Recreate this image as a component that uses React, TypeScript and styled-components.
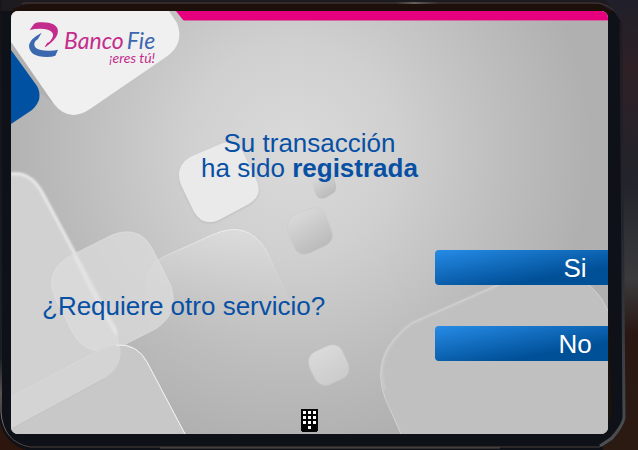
import React from "react";
import styled, { createGlobalStyle } from "styled-components";

const GlobalStyle = createGlobalStyle`
  * { box-sizing: border-box; }
  body { margin: 0; background: #11131a; }
`;

const Bezel = styled.div`
  position: relative;
  min-height: 100vh;
  display: flex;
  padding: 11px 30px 16px 11px;
  font-family: "Liberation Sans", Arial, sans-serif;
`;

const Backdrop = styled.svg`
  position: absolute;
  inset: 0;
  width: 100%;
  height: 100%;
`;

const Screen = styled.main`
  position: relative;
  flex: 1;
  display: flex;
  flex-direction: column;
  overflow: hidden;
  border-radius: 7px;
  background: #bdbdbd;
  color: #0850a4;
`;

const Header = styled.header`
  position: relative;
  display: flex;
  gap: 6px;
  height: 60px;
  padding: 11px 0 0 18px;
`;

const Mark = styled.svg`
  width: 29px;
  height: 35px;
`;

const Brand = styled.div`
  display: flex;
  flex-direction: column;
  align-items: flex-end;
  padding-top: 7px;
  font-family: Lato, sans-serif;
  font-style: italic;
  color: #c32c8c;
`;

const BrandName = styled.div`
  display: flex;
  gap: 3px;
  font-size: 23px;
  line-height: 23px;
`;

const BrandAccent = styled.span`
  color: #3b68ae;
`;

const Tagline = styled.div`
  font-size: 14px;
  line-height: 11px;
`;

const Message = styled.h1`
  position: relative;
  margin: 60px 0 0;
  font-size: 26px;
  line-height: 25px;
  font-weight: 400;
  text-align: center;
`;

const Prompt = styled.section`
  position: relative;
  display: flex;
  align-items: center;
  justify-content: space-between;
  margin-top: 69px;
`;

const Question = styled.h2`
  margin: 0 0 0 31px;
  font-size: 26px;
  line-height: 30px;
  font-weight: 400;
`;

const Answers = styled.div`
  display: flex;
  flex-direction: column;
  gap: 41px;
  width: 29%;
`;

const AnswerButton = styled.button`
  display: flex;
  justify-content: flex-end;
  height: 35px;
  padding: 0;
  border: 0;
  border-radius: 4px 0 0 4px;
  background: linear-gradient(170deg, #2488e2 4%, #005098 72%);
  color: #fff;
  font: 26px/36px "Liberation Sans", Arial, sans-serif;
  cursor: pointer;
`;

const AnswerLabel = styled.span`
  width: 66px;
  text-align: center;
`;

const Footer = styled.footer`
  position: relative;
  display: flex;
  justify-content: center;
  margin-top: auto;
  padding-bottom: 2px;
`;

const KeypadButton = styled.button`
  display: flex;
  padding: 0;
  border: 0;
  background: none;
  cursor: pointer;
`;

function BezelArt() {
  return (
    <Backdrop viewBox="0 0 638 450" preserveAspectRatio="none" aria-hidden="true">
      <defs>
        <linearGradient id="side" x1="0" x2="0" y1="0" y2="1">
          <stop offset="0" stopColor="#20202a" />
          <stop offset=".15" stopColor="#2e2025" />
          <stop offset=".4" stopColor="#22232b" />
          <stop offset=".62" stopColor="#3b3b3d" />
          <stop offset=".74" stopColor="#2a1713" />
          <stop offset="1" stopColor="#2b1a12" />
        </linearGradient>
        <linearGradient id="rim" x1="0" x2="0" y1="0" y2="1">
          <stop offset="0" stopColor="#221a20" />
          <stop offset=".5" stopColor="#23262e" />
          <stop offset="1" stopColor="#4b5056" />
        </linearGradient>
        <linearGradient id="edge" x1="0" x2="0" y1="0" y2="1">
          <stop offset="0" stopColor="#171318" />
          <stop offset=".8" stopColor="#282c30" />
          <stop offset=".88" stopColor="#a09588" />
          <stop offset="1" stopColor="#4d403b" />
        </linearGradient>
        <linearGradient id="shine">
          <stop offset="0" stopColor="#4a3a36" />
          <stop offset=".63" stopColor="#4a3a36" />
          <stop offset=".66" stopColor="#b0a496" />
          <stop offset=".7" stopColor="#4a3a36" />
          <stop offset="1" stopColor="#4a3a36" />
        </linearGradient>
      </defs>
      <rect width="638" height="450" fill="#0e1117" />
      <rect width="638" height="11" fill="#1d1a20" />
      <path d="M14 8 30 4H600L612 12 606 16H10Z" fill="#1d0f09" />
      <path d="M22 4 24 3H598Q610 5 616 13" fill="none" stroke="url(#shine)" />
      <path d="M612 8 621 22 625 418 603 446V450H638V0H606Z" fill="url(#side)" />
      <path d="M621 22 624 418Q622 427 612 438L600 446" fill="none" stroke="url(#rim)" strokeWidth="3" />
      <path d="M608 300 612 412 608 424Z" fill="#1b130e" />
      <path d="M1 0V412Q3 442 30 447H600" fill="none" stroke="url(#edge)" />
      <path d="M0 422Q5 443 26 450H0Z" fill="#2c160d" />
      <path d="M160 448H500" stroke="#978171" opacity=".5" />
    </Backdrop>
  );
}

function ScreenArt() {
  return (
    <Backdrop viewBox="11 11 597 423" preserveAspectRatio="none" aria-hidden="true">
      <defs>
        <radialGradient id="glow" gradientUnits="userSpaceOnUse" cx="292" cy="150" r="300">
          <stop offset="0" stopColor="#dadada" />
          <stop offset=".35" stopColor="#d0d0d0" />
          <stop offset=".72" stopColor="#bdbdbd" />
          <stop offset="1" stopColor="#b0b0b0" />
        </radialGradient>
        <linearGradient id="tile" x1=".1" y1="0" x2=".7" y2="1">
          <stop offset="0" stopColor="#dedede" />
          <stop offset="1" stopColor="#b8b8b8" />
        </linearGradient>
        <linearGradient id="paleTile" x1=".1" y1="0" x2=".7" y2="1">
          <stop offset="0" stopColor="#dddddd" />
          <stop offset="1" stopColor="#cacaca" />
        </linearGradient>
        <linearGradient id="fade" x1="0" y1="0" x2="0" y2="1">
          <stop offset="0" stopColor="#e0e0e0" stopOpacity=".7" />
          <stop offset=".5" stopColor="#c8c8c8" stopOpacity="0" />
        </linearGradient>
        <linearGradient id="fadeLine" x1="0" y1="0" x2="0" y2="1">
          <stop offset="0" stopColor="#ececec" />
          <stop offset=".8" stopColor="#d0d0d0" stopOpacity="0" />
        </linearGradient>
        <filter id="soft" x="-20%" y="-20%" width="140%" height="140%">
          <feGaussianBlur stdDeviation="1" />
        </filter>
      </defs>
      <rect x="11" y="11" width="597" height="423" fill="url(#glow)" />

      <path d="M146 285Q147 266 163 257L212 235Q247 219 266 250L300 322 340 434H146Z" fill="url(#fade)" />
      <path d="M146 285Q147 266 163 257L212 235Q247 219 266 250L302 327" fill="none" stroke="url(#fadeLine)" />

      <path d="M11 173Q31 171 43 194L117 332Q125 355 105 376L11 427Z" fill="#d1d1d1" />
      <path d="M11 174Q31 171 43 194L117 332" fill="none" stroke="#e9e9e9" strokeWidth="3" filter="url(#soft)" />
      <path d="M70 256 112 235Q140 224 153 250L171 286Q179 313 157 328L122 346Q90 360 74 335L56 300Q43 272 70 256Z" fill="#dddddd" fillOpacity=".72" stroke="#e2e2e2" strokeOpacity=".6" />
      <path d="M74 255 98 303 117 335" fill="none" stroke="#eeeeee" strokeWidth="2" opacity=".7" filter="url(#soft)" />

      <path d="M11 397 98 351Q130 334 147 362L185 434H11Z" fill="#c8c8c8" />
      <path d="M11 397 98 351Q109 344 120 345Q124 367 103 379L11 429Z" fill="#d4d4d4" />
      <path d="M104 379 11 429" stroke="#bcbcbc" opacity=".5" />
      <path d="M11 397 98 351Q130 334 147 362L185 434" fill="none" stroke="#d9d9d9" />
      <path d="M116 345Q138 344 147 362L185 434" fill="none" stroke="#efefef" />

      <path d="M401 434 385 398Q369 354 412 323L498 285Q583 252 608 311V434Z" fill="#c0c0c0" />
      <path d="M401 434 385 398Q369 354 412 323L498 285Q583 252 608 311" fill="none" stroke="#d2d2d2" />
      <path d="M385 390Q372 354 412 323L498 285" fill="none" stroke="#d5d5d5" strokeWidth="2" opacity=".6" filter="url(#soft)" />

      <path d="M190 158 218 146Q234 138 243 153L256 180Q264 196 249 205L219 221Q203 228 194 213L181 186Q174 168 190 158Z" fill="#bbbbbb" filter="url(#soft)" />
      <path d="M190 157 218 145Q234 137 243 152L256 179Q264 195 249 204L219 220Q203 227 194 212L181 185Q174 167 190 157Z" fill="#eaeaea" />
      <path d="M294 215 309 209Q320 205 325 214L331 229Q336 240 325 246L310 253Q300 257 295 249L289 235Q284 221 294 215Z" fill="url(#tile)" stroke="#cccccc" strokeOpacity=".6" />
      <path d="M317 176 327 172Q332 170 334 176L336 186Q337 191 332 194L325 198Q319 200 316 195L313 187Q311 180 317 176Z" fill="url(#tile)" />
      <path d="M316 351 327 346Q337 342 342 350L348 363Q352 374 342 379L329 385Q320 387 315 379L310 369Q305 356 316 351Z" fill="url(#paleTile)" stroke="#c3c3c3" strokeOpacity=".6" />

      <path d="M11 42 54 104 39 92 11 52Z" fill="#b0b0b0" />
      <path d="M11 11H169L177 23Q185 44 166 57L90 109Q69 123 54 104L11 42Z" fill="#f0f0f0" />
      <path d="M11 50 37 86Q44 99 32 110L11 124Z" fill="#0051a1" />
      <path d="M176 11H608V20H183Z" fill="#e6007e" />
      <path d="M183 20H608V21H184Z" fill="#d469a0" />
    </Backdrop>
  );
}

function BankMark() {
  return (
    <Mark viewBox="87 66 87 105" role="img" aria-label="Banco Fie">
      <path d="M89 90 100 75Q104 68 117 67Q145 65 160 73Q181 85 170 108Q164 121 137 141L134 141 142 128 148 126Q164 108 157 98Q149 86 120 86Q103 86 89 90Z" fill="#c32c8c" />
      <path d="M125 98Q92 116 88 132Q84 150 100 162Q115 171 140 171Q157 171 166 167L174 149Q164 152 149 152Q121 153 108 144Q98 134 107 122L114 117Z" fill="#3b68ae" />
    </Mark>
  );
}

function KeypadIcon() {
  const cells = [0, 1, 2].flatMap((row) => [0, 1, 2].map((col) => [col, row]));
  return (
    <svg width="17" height="23" viewBox="0 0 17 23" aria-hidden="true">
      <path d="M0 0H17V22H16V23H1V22H0Z" fill="#050505" />
      {[...cells, [1, 3]].map(([col, row]) => (
        <rect key={`${col}-${row}`} x={2 + col * 5} y={2 + row * 5} width="3" height="3" fill="#fff" />
      ))}
    </svg>
  );
}

export default function App() {
  return (
    <>
      <GlobalStyle />
      <Bezel>
        <BezelArt />
        <Screen>
          <ScreenArt />
          <Header>
            <BankMark />
            <Brand>
              <BrandName>
                <span>Banco</span>
                <BrandAccent>Fie</BrandAccent>
              </BrandName>
              <Tagline>¡eres tú!</Tagline>
            </Brand>
          </Header>
          <Message>
            Su transacción
            <br />
            ha sido <strong>registrada</strong>
          </Message>
          <Prompt>
            <Question id="question">¿Requiere otro servicio?</Question>
            <Answers role="group" aria-labelledby="question">
              <AnswerButton type="button">
                <AnswerLabel>Si</AnswerLabel>
              </AnswerButton>
              <AnswerButton type="button">
                <AnswerLabel>No</AnswerLabel>
              </AnswerButton>
            </Answers>
          </Prompt>
          <Footer>
            <KeypadButton type="button" aria-label="Teclado">
              <KeypadIcon />
            </KeypadButton>
          </Footer>
        </Screen>
      </Bezel>
    </>
  );
}
